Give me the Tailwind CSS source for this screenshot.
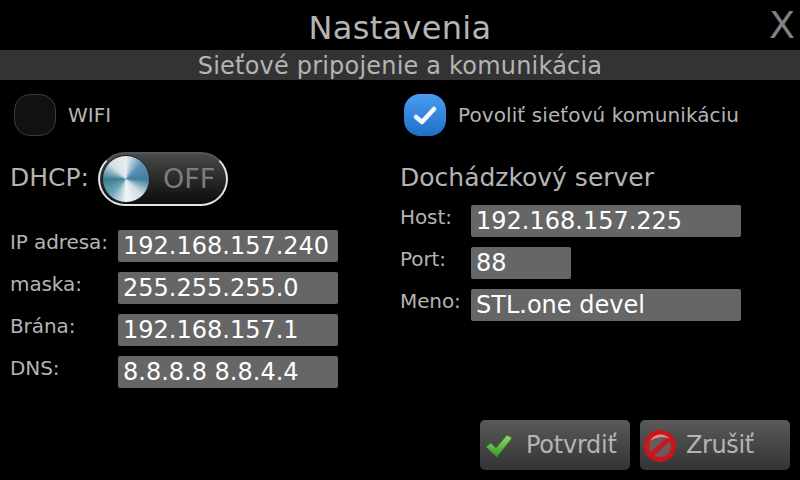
<!DOCTYPE html>
<html lang="en">
<head>
    <meta charset="UTF-8">
    <title>Nastavenia</title>
    <script src="https://cdn.jsdelivr.net/npm/@tailwindcss/browser@4"></script>
</head>
<body class="bg-black">
    <div class="relative w-[800px] h-[480px] overflow-hidden bg-black text-[#b4b4b4] font-['DejaVu_Sans',sans-serif]">
        <h1 class="h-[50px] pt-[7px] text-center text-[32px] leading-[42px] tracking-[0.3px]">Nastavenia</h1>
        <span class="absolute right-[5px] top-[3px] text-[38px] leading-[44px] text-[#808080]">X</span>
        <h2 class="h-[30px] bg-[#333333] text-center text-[24px] leading-[32px] tracking-[0.2px]">Sieťové pripojenie a komunikácia</h2>

        <div class="flex">
            <!-- left column -->
            <div class="w-[400px]">
                <div class="flex items-center h-[42px] mt-[14px] ml-[14px]">
                    <div class="w-[42px] h-[42px] rounded-[16px] border border-[#3a3a3a] bg-[#111111]"></div>
                    <span class="ml-[12px] text-[20px]">WIFI</span>
                </div>
                <div class="flex items-center h-[54px] mt-[16px] ml-[10px]">
                    <span class="w-[88px] text-[25px] leading-[50px] -mt-[2px]">DHCP:</span>
                    <div class="flex items-center w-[130px] h-[54px] rounded-full border-2 border-[#e4e4e4] border-t-[#555555] bg-gradient-to-b from-[#4a4a4a] to-[#0c0c0c]">
                        <div class="w-[48px] h-[48px] rounded-full ml-[2px] border border-[#222222] bg-[conic-gradient(#e8eef2,#5f93b5,#3f7f9f,#cfdde4,#f2f5f6,#6ea3b8,#3b7f92,#d4e2e8,#e8eef2)]"></div>
                        <span class="ml-[13px] text-[27px] text-[#7c7c7c]">OFF</span>
                    </div>
                </div>
                <div class="flex flex-col gap-[10px] mt-[24px] ml-[10px]">
                    <div class="flex h-[32px]">
                        <span class="w-[108px] text-[20px] leading-[25px] tracking-[-0.1px]">IP adresa:</span>
                        <div class="w-[220px] rounded-[2px] bg-[#666666] pl-[5px] text-[24px] leading-[32px] text-white">192.168.157.240</div>
                    </div>
                    <div class="flex h-[32px]">
                        <span class="w-[108px] text-[20px] leading-[25px] tracking-[-0.1px]">maska:</span>
                        <div class="w-[220px] rounded-[2px] bg-[#666666] pl-[5px] text-[24px] leading-[32px] text-white">255.255.255.0</div>
                    </div>
                    <div class="flex h-[32px]">
                        <span class="w-[108px] text-[20px] leading-[25px] tracking-[-0.1px]">Brána:</span>
                        <div class="w-[220px] rounded-[2px] bg-[#666666] pl-[5px] text-[24px] leading-[32px] text-white">192.168.157.1</div>
                    </div>
                    <div class="flex h-[32px]">
                        <span class="w-[108px] text-[20px] leading-[25px] tracking-[-0.1px]">DNS:</span>
                        <div class="w-[220px] rounded-[2px] bg-[#666666] pl-[5px] text-[24px] leading-[32px] text-white">8.8.8.8 8.8.4.4</div>
                    </div>
                </div>
            </div>

            <!-- right column -->
            <div class="w-[400px]">
                <div class="flex items-center h-[42px] mt-[14px] ml-[4px]">
                    <div class="flex items-center justify-center w-[42px] h-[42px] rounded-[16px] bg-gradient-to-b from-[#4a9df0] to-[#1f6fc8]">
                        <svg width="28" height="24" viewBox="0 0 28 24"><path d="M5 14 L11 19 L23 6" fill="none" stroke="#f4f8fb" stroke-width="4.5" stroke-linecap="round" stroke-linejoin="round"/></svg>
                    </div>
                    <span class="ml-[12px] text-[20px] tracking-[0.1px]">Povoliť sieťovú komunikáciu</span>
                </div>
                <div class="text-[25px] leading-[32px] mt-[26px]">Dochádzkový server</div>
                <div class="flex flex-col gap-[10px] mt-[11px]">
                    <div class="flex h-[32px]">
                        <span class="w-[71px] text-[20px] leading-[25px] tracking-[-0.1px]">Host:</span>
                        <div class="w-[270px] rounded-[2px] bg-[#666666] pl-[5px] text-[24px] leading-[32px] text-white">192.168.157.225</div>
                    </div>
                    <div class="flex h-[32px]">
                        <span class="w-[71px] text-[20px] leading-[25px] tracking-[-0.1px]">Port:</span>
                        <div class="w-[100px] rounded-[2px] bg-[#666666] pl-[5px] text-[24px] leading-[32px] text-white">88</div>
                    </div>
                    <div class="flex h-[32px]">
                        <span class="w-[71px] text-[20px] leading-[25px] tracking-[-0.1px]">Meno:</span>
                        <div class="w-[270px] rounded-[2px] bg-[#666666] pl-[5px] text-[24px] leading-[32px] text-white">STL.one devel</div>
                    </div>
                </div>
            </div>
        </div>

        <!-- buttons -->
        <div class="absolute right-[10px] bottom-[10px] flex gap-[10px]">
            <div class="flex items-center w-[150px] h-[50px] rounded-[5px] bg-gradient-to-b from-[#5a5a5a] to-[#333333] text-[24px] tracking-[-0.25px]">
                <svg class="ml-[5px] mt-[1px]" width="28" height="26" viewBox="0 0 28 26">
                    <defs><linearGradient id="chk" x1="0" y1="0" x2="0" y2="1"><stop offset="0" stop-color="#9bd96a"/><stop offset="1" stop-color="#2f9a2a"/></linearGradient></defs>
                    <path d="M1 14 L6 10 L11 15 L22 2 L27 5 L12 24 Z" fill="url(#chk)" stroke="#3a7f2c" stroke-width="0.8"/>
                </svg>
                <span class="ml-[13px]">Potvrdiť</span>
            </div>
            <div class="flex items-center w-[150px] h-[50px] rounded-[5px] bg-gradient-to-b from-[#5a5a5a] to-[#333333] text-[24px] tracking-[-0.4px]">
                <svg class="ml-[3px] mt-[1px]" width="34" height="34" viewBox="0 0 34 34">
                    <circle cx="17" cy="17" r="13.5" fill="#6a5a5a" stroke="#c8161c" stroke-width="5"/>
                    <path d="M8 26 L27 9" stroke="#c8161c" stroke-width="5"/>
                    <path d="M7 12 A12 12 0 0 1 27 10 A19 19 0 0 0 7 12 Z" fill="#e88a8a"/>
                </svg>
                <span class="ml-[9px]">Zrušiť</span>
            </div>
        </div>
    </div>
</body>
</html>
